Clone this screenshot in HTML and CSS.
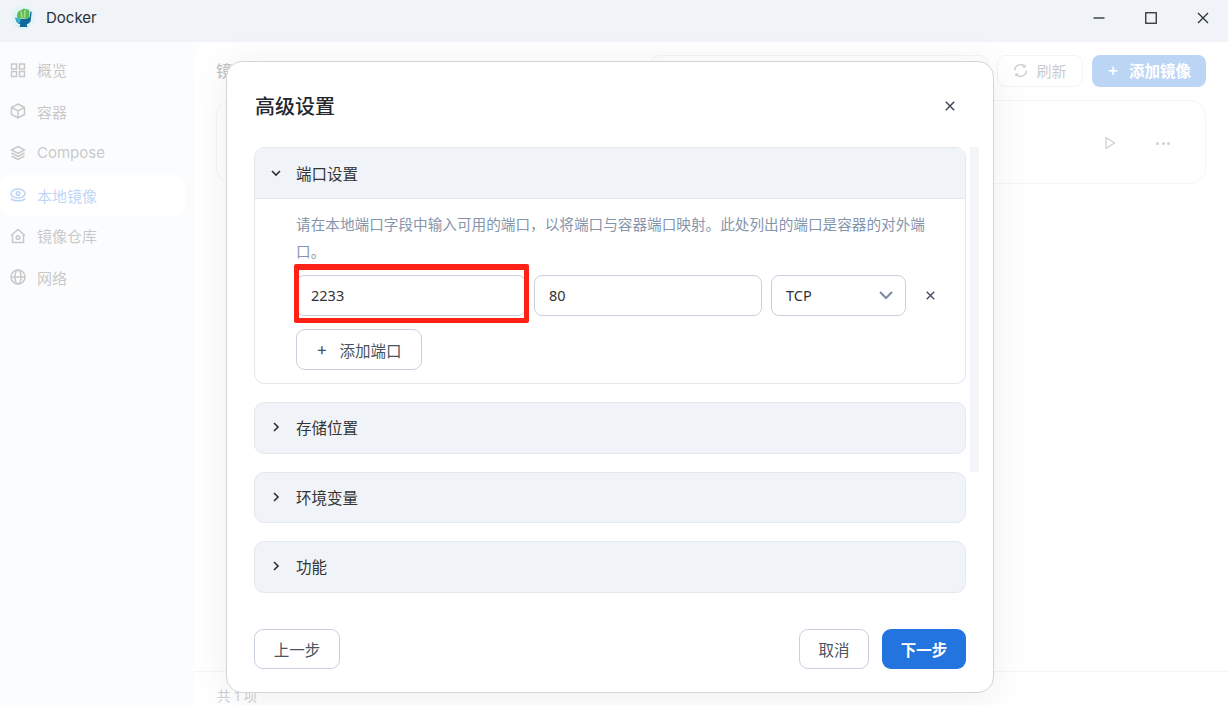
FILE: index.html
```html
<!DOCTYPE html>
<html lang="zh-CN">
<head>
<meta charset="utf-8">
<title>Docker</title>
<link rel="stylesheet" href="styles.css">
</head>
<body>
<div class="app">
  <header class="titlebar">
    <svg class="logo" width="24" height="24" viewBox="0 0 24 24">
      <circle cx="12" cy="12" r="11.500" fill="#dff3f8"/>
      <path d="M6 11C6 7 7.500 4 10 4.500c1-2 4-2.500 5-1 2-.5 3.500.5 3.500 2.500L18 12.500H6.500z" fill="#5dbb58"/>
      <path d="M10 5.500l1 6M14 4l-.5 7.500" stroke="#a6dc86" stroke-width="1.600" fill="none"/>
      <path d="M4.500 11.500c2 1 4 1.500 6 1.500 3 0 6-.5 8-1.500l1-6 1.200.3-1 9c-.5 2-2 3-4 3.500l.8 2.700H8.500l.8-2.700c-2.800-.7-4.800-3-4.800-6.300z" fill="#0f6a9e"/>
      <path d="M4.500 11.500c1.500.8 3 1.300 5 1.400l-.5 4.400c-2.800-.7-4.500-2.800-4.500-5.800z" fill="#36b3cf"/>
    </svg>
    <span class="app-name">Docker</span>
    <div class="win-controls">
      <svg width="12" height="12" viewBox="0 0 12 12"><path d="M0.500 6h11" stroke="#3c4450" stroke-width="1.500"/></svg>
      <svg width="12" height="12" viewBox="0 0 12 12"><rect x=".75" y=".75" width="10.500" height="10.500" fill="none" stroke="#2b3038" stroke-width="1.300"/></svg>
      <svg width="12" height="12" viewBox="0 0 12 12"><path d="M1 1l10 10M11 1L1 11" stroke="#2b3038" stroke-width="1.300"/></svg>
    </div>
  </header>

  <div class="workspace">
    <nav class="sidebar">
      <a class="nav-item">
        <svg class="nav-icon" viewBox="0 0 16 16"><rect x="1.500" y="2" width="5" height="5"/><rect x="9.500" y="2" width="5" height="5"/><rect x="1.500" y="9.500" width="5" height="5"/><rect x="9.500" y="9.500" width="5" height="5"/></svg>
        <span>概览</span>
      </a>
      <a class="nav-item">
        <svg class="nav-icon" viewBox="0 0 16 16"><path d="M8 1l6.500 3.500v7L8 15l-6.500-3.500v-7zM1.500 4.500L8 8l6.500-3.500M8 8v7"/></svg>
        <span>容器</span>
      </a>
      <a class="nav-item">
        <svg class="nav-icon" viewBox="0 0 16 16"><path d="M8 1.500l6.500 3.500L8 8.500 1.500 5zM1.500 8L8 11.500 14.500 8M1.500 11L8 14.500l6.500-3.500"/></svg>
        <span>Compose</span>
      </a>
      <a class="nav-item active">
        <svg class="nav-icon" viewBox="0 0 16 16"><ellipse cx="8" cy="6.500" rx="7" ry="4.500"/><circle cx="8" cy="6.500" r="1.800"/><path d="M1 11.500c2 3 12 3 14 0"/></svg>
        <span>本地镜像</span>
      </a>
      <a class="nav-item">
        <svg class="nav-icon" viewBox="0 0 16 16"><path d="M1 7.500L8 1.500l7 6M2.500 6.500v8h11v-8"/><circle cx="8" cy="9.500" r="1.800"/></svg>
        <span>镜像仓库</span>
      </a>
      <a class="nav-item">
        <svg class="nav-icon" viewBox="0 0 16 16"><circle cx="8" cy="8" r="7"/><ellipse cx="8" cy="8" rx="3" ry="7"/><path d="M1 8h14"/></svg>
        <span>网络</span>
      </a>
    </nav>

    <main class="main">
      <div class="toolbar">
        <h1 class="page-title">镜像</h1>
        <div class="search"></div>
        <button class="btn-ghost">
          <svg width="15" height="15" viewBox="0 0 16 16" fill="none" stroke="#5f6368" stroke-width="1.500"><path d="M1.800 8a6.200 6.200 0 0 1 10.700-4.300M14.200 8a6.200 6.200 0 0 1-10.700 4.300"/><path d="M12.800 1.800v2.400h-2.400M3.200 14.200v-2.400h2.400"/></svg>
          刷新
        </button>
        <button class="btn-add"><span class="plus">+</span>添加镜像</button>
      </div>
      <section class="image-card">
        <svg width="14" height="14" viewBox="0 0 14 14" fill="none" stroke="#59606c" stroke-width="1.300"><path d="M3 1.500l8.500 5.500L3 12.500z" stroke-linejoin="round"/></svg>
        <span class="dots"><i></i><i></i><i></i></span>
      </section>
      <footer class="main-footer">共 1 项</footer>
    </main>
  </div>

  <div class="scrim"></div>

  <div class="modal">
    <div class="modal-head">
      <h2>高级设置</h2>
      <svg class="icon-x" width="10" height="10" viewBox="0 0 10 10"><path d="M.8.800l8.400 8.400M9.200.8L.8 9.200"/></svg>
    </div>
    <div class="modal-scroll">
      <div class="panels">
        <section class="panel open">
          <div class="panel-head">
            <svg class="chev" width="10" height="10" viewBox="0 0 10 10"><path d="M1 3l4 4 4-4"/></svg>
            <span>端口设置</span>
          </div>
          <div class="panel-body">
            <p class="hint">请在本地端口字段中输入可用的端口，以将端口与容器端口映射。此处列出的端口是容器的对外端口。</p>
            <div class="port-row">
              <div class="field field-local">2233<span class="highlight"></span></div>
              <div class="field field-container">80</div>
              <div class="field field-proto">TCP
                <svg width="14" height="9" viewBox="0 0 14 9" fill="none" stroke="#7c8ba1" stroke-width="2"><path d="M1 1l6 6 6-6"/></svg>
              </div>
              <svg class="icon-x remove" width="9" height="9" viewBox="0 0 10 10"><path d="M.8.800l8.400 8.400M9.200.8L.8 9.200"/></svg>
            </div>
            <button class="btn-outline add-port"><span class="plus-dark">+</span>添加端口</button>
          </div>
        </section>
        <section class="panel">
          <div class="panel-head">
            <svg class="chev" width="10" height="10" viewBox="0 0 10 10"><path d="M3 1l4 4-4 4"/></svg>
            <span>存储位置</span>
          </div>
        </section>
        <section class="panel">
          <div class="panel-head">
            <svg class="chev" width="10" height="10" viewBox="0 0 10 10"><path d="M3 1l4 4-4 4"/></svg>
            <span>环境变量</span>
          </div>
        </section>
        <section class="panel">
          <div class="panel-head">
            <svg class="chev" width="10" height="10" viewBox="0 0 10 10"><path d="M3 1l4 4-4 4"/></svg>
            <span>功能</span>
          </div>
        </section>
      </div>
      <div class="scrollbar"></div>
    </div>
    <div class="modal-foot">
      <button class="btn-outline btn-prev">上一步</button>
      <div class="foot-right">
        <button class="btn-outline btn-cancel">取消</button>
        <button class="btn-primary">下一步</button>
      </div>
    </div>
  </div>
</div>
</body>
</html>
```
FILE: styles.css
```css
* { box-sizing: border-box; }
html, body { margin: 0; height: 100%; overflow: hidden; }
body {
  font-family: Inter, "Noto Sans CJK SC", sans-serif;
  color: #2b3038;
  background: #fff;
}
button { font-family: inherit; cursor: pointer; }

.app { position: relative; width: 1228px; height: 705px; display: flex; flex-direction: column; }

.titlebar {
  height: 42px;
  flex: none;
  background: #f0f4f9;
  display: flex;
  align-items: center;
  padding: 0 19px 7px 11px;
}
.logo { flex: none; }
.app-name { margin-left: 11px; font-size: 15px; color: #2b3038; }
.win-controls { margin-left: auto; display: flex; gap: 40px; }

.workspace { flex: 1; display: flex; background: #f0f4f9; min-height: 0; }

.sidebar { width: 194px; flex: none; padding: 7px 9px 0 0; display: flex; flex-direction: column; gap: 0.6px; }
.nav-item {
  height: 41px;
  display: flex;
  align-items: center;
  gap: 11px;
  padding-left: 10px;
  border-radius: 10px;
  font-size: 15px;
  color: #484848;
}
.nav-item.active { background: #fff; color: #2374de; margin-top: 1px; margin-bottom: -1px; }
.nav-icon { width: 16px; height: 16px; fill: none; stroke: currentColor; stroke-width: 1.500; flex: none; }

.main {
  flex: 1;
  background: #fff;
  border-radius: 16px 0 0 0;
  display: flex;
  flex-direction: column;
  padding: 13px 22px 0 22px;
  min-width: 0;
}
.toolbar { display: flex; align-items: center; gap: 9px; height: 32px; flex: none; }
.page-title { margin: 0 auto 2px 0; font-size: 16px; font-weight: 500; color: #3a3f47; }
.search { width: 337px; height: 32px; border: 1px solid #d4d9e2; border-radius: 8px; }
.btn-ghost {
  width: 86px; height: 32px;
  background: #fff;
  border: 1px solid #d4d9e2;
  border-radius: 8px;
  font-size: 15px;
  color: #4a4f57;
  display: flex; align-items: center; justify-content: center; gap: 8px;
  padding: 0 0 2px;
}
.btn-add {
  width: 114px; height: 32px;
  background: #2374de;
  border: 0;
  border-radius: 8px;
  color: #fff;
  font-size: 15.500px;
  font-weight: 600;
  display: flex; align-items: center; justify-content: center; gap: 10px;
  padding: 0 0 2px;
}
.plus { font-size: 18px; font-weight: 400; line-height: 1; }

.image-card {
  margin-top: 13px;
  height: 84px;
  flex: none;
  border: 1px solid #d8dde6;
  border-radius: 16px;
  display: flex;
  align-items: center;
  justify-content: flex-end;
  gap: 39px;
  padding: 2px 35px 0 0;
}
.dots { display: flex; gap: 2.500px; }
.dots i { width: 3px; height: 3px; border-radius: 50%; background: #59606c; }

.main-footer {
  margin: auto -22px 0 -22px;
  height: 34px;
  border-top: 1px solid #d8dde6;
  padding: 13px 0 0 23px;
  font-size: 13.500px;
  color: #585d66;
}

.scrim { position: absolute; left: 0; right: 0; top: 42px; bottom: 0; background: rgba(255, 255, 255, .7); }

.modal {
  position: absolute;
  left: 226px;
  top: 61px;
  width: 768px;
  height: 632px;
  background: #fff;
  border: 1px solid #d3d5d8;
  border-radius: 16px;
  box-shadow: 0 4px 40px rgba(0, 0, 0, .07);
  display: flex;
  flex-direction: column;
}
.modal-head {
  height: 85px;
  flex: none;
  display: flex;
  align-items: center;
  justify-content: space-between;
  padding: 2px 38px 0 28px;
}
.modal-head h2 { margin: 0; font-size: 20px; font-weight: 500; color: #23272e; }
.icon-x path { stroke: #3f4a5a; stroke-width: 1.500; fill: none; }

.modal-scroll { flex: 1; display: flex; padding-left: 27px; min-height: 0; }
.panels { width: 712px; flex: none; display: flex; flex-direction: column; gap: 18px; }
.panel { border: 1px solid #e3e7ee; border-radius: 10px; background: #f0f3f8; }
.panel.open { background: #fff; }
.panel-head {
  height: 49.500px;
  display: flex;
  align-items: center;
  padding: 0 0 1px 16px;
  gap: 15px;
  font-size: 15.500px;
  color: #333;
  background: #f0f3f8;
  border-radius: 10px;
}
.panel.open .panel-head { border-bottom: 1px solid #e3e7ee; border-radius: 10px 10px 0 0; height: 51px; padding-bottom: 0; }
.chev { fill: none; stroke: #2b3038; stroke-width: 1.600; flex: none; }
.panel-body { padding: 13px 0 13px 41px; height: 184px; }
.hint { margin: 0; width: 634px; font-size: 14.630px; line-height: 27px; color: #8595ab; }
.port-row { display: flex; align-items: center; margin-top: 9px; }
.field {
  height: 41px;
  border: 1px solid #c9d1de;
  border-radius: 8px;
  display: flex;
  align-items: center;
  padding: 0 0 1px 14px;
  font-family: "Noto Sans", "Noto Sans CJK SC", sans-serif;
  font-size: 14.500px;
  color: #333;
  background: #fff;
}
.field-local { position: relative; width: 230px; }
.field-container { width: 228px; margin-left: 8px; }
.field-proto { width: 135px; margin-left: 9px; justify-content: space-between; padding-right: 12px; }
.remove { margin-left: 20px; }
.highlight {
  position: absolute;
  left: -3px;
  top: -12px;
  width: 235px;
  height: 59px;
  border: 5px solid #fe2116;
  border-top-width: 6px;
  border-radius: 2px;
  pointer-events: none;
}
.btn-outline {
  background: #fff;
  border: 1px solid #c9d1de;
  border-radius: 9px;
  font-size: 15.500px;
  color: #4a5361;
  padding: 0;
}
.add-port {
  margin-top: 13px;
  width: 126px;
  height: 41px;
  display: flex;
  align-items: center;
  justify-content: center;
  gap: 12px;
}
.plus-dark { font-size: 17px; line-height: 1; }
.scrollbar { width: 9px; height: 325px; margin-left: 4px; background: #f4f5f8; flex: none; }

.modal-foot {
  flex: none;
  height: 63px;
  padding: 0 27px 23px 27px;
  display: flex;
  align-items: flex-start;
  justify-content: space-between;
}
.foot-right { display: flex; gap: 13px; }
.btn-prev { width: 86px; height: 40px; }
.btn-cancel { width: 70px; height: 40px; }
.btn-primary {
  width: 84px; height: 40px;
  background: #2374de;
  border: 0;
  border-radius: 9px;
  color: #fff;
  font-size: 15.500px;
  font-weight: 600;
  padding: 0;
}
```
